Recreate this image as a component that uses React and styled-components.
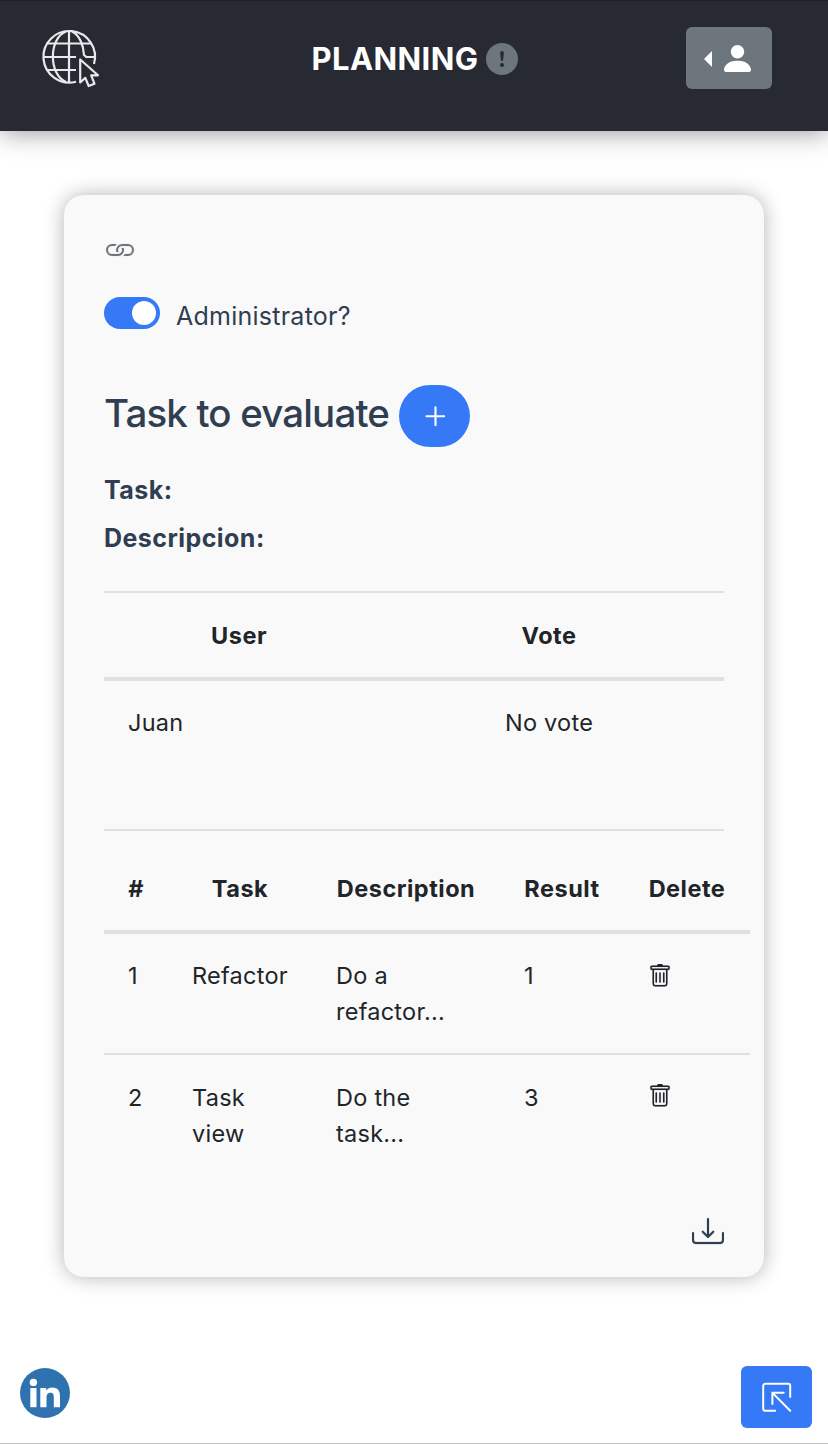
import React from "react";
import styled, { createGlobalStyle } from "styled-components";
import { BsTrash, BsLink } from "react-icons/bs";

const blue = "#3579f7";
const slate = "#2f3e50";

const GlobalStyle = createGlobalStyle`
  * { box-sizing: border-box; }
  body {
    margin: 0;
    background: #fff;
    font-family: Inter, "Liberation Sans", sans-serif;
    color: ${slate};
  }
  svg { display: block; }
  button { border: 0; margin: 0; padding: 0; font: inherit; }
`;

const Page = styled.div`
  height: 1444px;
  display: flex;
  flex-direction: column;
  border-bottom: 1px solid #c4c4c6;
`;

const Header = styled.header`
  height: 131px;
  flex: none;
  display: grid;
  grid-template-columns: 1fr auto 1fr;
  align-items: start;
  padding: 26px 56px 0;
  background: #272a33;
  border-top: 1px solid #1d2027;
  box-shadow: 0 0 26px rgba(0, 0, 0, 0.45);
`;

const Brand = styled.div`
  margin-left: -16px;
  padding-top: 1px;
`;

const Title = styled.h1`
  margin: 16px 0 0 2px;
  display: flex;
  align-items: center;
  gap: 8px;
  height: 32px;
  font-size: 31px;
  line-height: 32px;
  font-weight: 700;
  letter-spacing: 0.4px;
  color: #fff;
`;

const UserButton = styled.button`
  justify-self: end;
  width: 86px;
  height: 62px;
  display: flex;
  align-items: center;
  padding-left: 18px;
  gap: 12px;
  border-radius: 6px;
  background: #6d757d;
`;

const Caret = styled.span`
  margin-top: 2px;
  border: 8px solid transparent;
  border-left: 0;
  border-right-color: #fff;
`;

const Card = styled.main`
  width: 700px;
  height: 1082px;
  flex: none;
  margin: 64px 0 0 64px;
  padding: 38px 40px 0;
  display: flex;
  flex-direction: column;
  border-radius: 20px;
  background: #f9f9f9;
  box-shadow: 0 0 20px rgba(0, 0, 0, 0.3);
`;

const LinkIcon = styled(BsLink)`
  color: #6d757d;
  stroke: #6d757d;
  stroke-width: 0.05;
`;

const TrashIcon = styled(BsTrash)`
  stroke: currentColor;
  stroke-width: 0.1;
`;

const AdminRow = styled.label`
  display: flex;
  align-items: center;
  gap: 16px;
  height: 32px;
  margin-top: 32px;
  font-size: 25px;
  letter-spacing: 0.25px;
`;

const AdminText = styled.span`
  padding-top: 6px;
`;

const Switch = styled.span`
  width: 56px;
  height: 32px;
  padding: 4px;
  display: flex;
  justify-content: flex-end;
  border-radius: 16px;
  background: ${blue};
`;

const Knob = styled.span`
  width: 24px;
  height: 24px;
  border-radius: 50%;
  background: #fff;
`;

const EvaluateRow = styled.div`
  display: flex;
  height: 62px;
  margin-top: 56px;
`;

const Heading = styled.h2`
  width: 295px;
  margin: 0;
  font-size: 38.5px;
  line-height: 57px;
  font-weight: 500;
  letter-spacing: -0.85px;
  white-space: nowrap;
`;

const AddButton = styled.button`
  width: 71px;
  height: 62px;
  display: grid;
  place-items: center;
  border-radius: 31px;
  background: ${blue};
`;

const Facts = styled.div`
  margin-top: 19px;
  height: 125px;
  font-size: 25px;
  line-height: 48px;
  font-weight: 700;
  letter-spacing: 0.45px;
`;

const Fact = styled.div``;

const VoteSection = styled.section`
  height: 240px;
  border-top: 2px solid #dee0e2;
  border-bottom: 2px solid #dee0e2;
`;

const TaskSection = styled.section`
  width: 646px;
  padding-top: 15px;
`;

const Table = styled.table`
  width: 100%;
  table-layout: fixed;
  border-collapse: separate;
  border-spacing: 0;
  color: #212529;
  font-size: 23.5px;
  line-height: 36px;
  letter-spacing: 0.5px;
`;

const HeadCell = styled.th`
  width: ${(p) => p.$width}px;
  height: 88px;
  padding: 2px 0 0;
  font-weight: 700;
  text-align: center;
  border-bottom: 4px solid #dee1e4;
`;

const Cell = styled.td`
  padding: ${(p) => (p.$next ? "25px" : "24px")} 24px 23px;
  vertical-align: top;
  text-align: ${(p) => (p.$center ? "center" : "left")};
  letter-spacing: 0.25px;
  border-top: ${(p) => (p.$next ? "2px solid #dee0e2" : "0")};
`;

const DeleteCell = styled(Cell)`
  padding-top: ${(p) => (p.$next ? "29px" : "30px")};
`;

const DownloadRow = styled.div`
  display: flex;
  justify-content: flex-end;
  margin-top: auto;
  padding-bottom: 29px;
`;

const Footer = styled.footer`
  display: flex;
  justify-content: space-between;
  align-items: flex-start;
  margin-top: 89px;
  padding: 0 16px 0 20px;
`;

const SocialLink = styled.a`
  display: block;
  margin-top: 2px;
`;

const ExitButton = styled.button`
  width: 71px;
  height: 62px;
  display: grid;
  place-items: center;
  border-radius: 6px;
  background: ${blue};
`;

const GlobeLogo = () => (
  <svg width="62" height="62" viewBox="40 28 62 62" fill="none" stroke="#e6eaeb" strokeWidth="2.200">
    <path d="M76 81.700A25.800 25.800 0 1 1 94 64" />
    <path d="M69 31V82.500M46.500 43.500H91.500M43 57H76M85.500 57H95M47 70H76" />
    <path d="M66 31.500C48.500 38 48.500 75 66 82M72 31.500C80 35 83.500 46 84 55L87 57.500" />
    <path d="M80.200 59.500V82.500L85.300 77.800L88.700 86L94.500 83.800L91.200 75.300H98Z" strokeLinejoin="round" />
  </svg>
);

const AlertIcon = () => (
  <svg width="32" height="32" viewBox="0 0 16 16">
    <circle cx="8" cy="8" r="8" fill="#6d757d" />
    <path fill="#272a33" d="M8 4a.9.9 0 0 0-.9.995l.35 3.507a.55.55 0 0 0 1.1 0l.35-3.507A.9.9 0 0 0 8 4zm0 6a1 1 0 1 0 0 2 1 1 0 0 0 0-2z" />
  </svg>
);

const PersonIcon = () => (
  <svg width="27" height="27" viewBox="2 2 12 12" fill="#fff">
    <path d="M3 14s-1 0-1-1 1-4 6-4 6 3 6 4-1 1-1 1H3zm5-6a3 3 0 1 0 0-6 3 3 0 0 0 0 6z" />
  </svg>
);

const PlusIcon = () => (
  <svg width="20" height="20" viewBox="0 0 20 20" stroke="#fff" strokeWidth="2.100" strokeLinecap="round">
    <path d="M10.500 1.200V19M1.500 10.200H19.200" />
  </svg>
);

const DownloadIcon = () => (
  <svg width="32" height="32" viewBox="0 0 16 16" fill={slate} stroke={slate} strokeWidth="0.100">
    <path d="M.5 8a.5.5 0 0 1 .5.5V12a1 1 0 0 0 1 1h12a1 1 0 0 0 1-1V8.500a.5.5 0 0 1 1 0V12a2 2 0 0 1-2 2H2a2 2 0 0 1-2-2V8.500A.5.5 0 0 1 .5 8z" />
    <path d="M5 7.500a.5.5 0 0 1 .707 0L8 9.793 10.293 7.500a.5.5 0 1 1 .707.707l-2.646 2.647a.5.5 0 0 1-.708 0L5 8.207A.5.5 0 0 1 5 7.500z" />
    <path d="M8 1a.5.5 0 0 1 .5.5v8a.5.5 0 0 1-1 0v-8A.5.5 0 0 1 8 1z" />
  </svg>
);

const ExitIcon = () => (
  <svg width="30" height="30" viewBox="0.800 -0.600 30 30" fill="none" stroke="#fff" strokeWidth="2" strokeLinecap="round" strokeLinejoin="round">
    <path d="M14 28.200H4A2 2 0 0 1 2 26.200V3.200A2 2 0 0 1 4 1.200H27A2 2 0 0 1 29 3.200V14.500" />
    <path d="M11.200 21.500V10.200H22.500M11.500 10.500L29 28.200" strokeLinejoin="miter" />
  </svg>
);

const LinkedInLogo = () => (
  <svg width="50" height="50" viewBox="0 0 50 50" fill="#fff">
    <circle cx="25" cy="25" r="25" fill="#2f72b0" />
    <circle cx="13.400" cy="14.400" r="3.700" />
    <path d="M10.300 20H16.500V39.200H10.300Z" />
    <path d="M20.300 20H26.200V22.600C27.200 20.900 29.200 19.500 32.200 19.500C38.300 19.500 40 23.300 40 28.700V39.200H33.800V29.800C33.800 27.300 33.600 24.800 30.600 24.800C27.500 24.800 26.500 27 26.500 29.700V39.200H20.300Z" />
  </svg>
);

const tasks = [
  { id: 1, name: "Refactor", description: "Do a refactor...", result: 1 },
  { id: 2, name: "Task view", description: "Do the task...", result: 3 },
];

export default function App() {
  return (
    <>
      <GlobalStyle />
      <Page>
        <Header>
          <Brand><GlobeLogo /></Brand>
          <Title>PLANNING<AlertIcon /></Title>
          <UserButton aria-label="User menu"><Caret /><PersonIcon /></UserButton>
        </Header>
        <Card>
          <LinkIcon size={32} />
          <AdminRow>
            <Switch><Knob /></Switch>
            <AdminText>Administrator?</AdminText>
          </AdminRow>
          <EvaluateRow>
            <Heading>Task to evaluate</Heading>
            <AddButton aria-label="Add task"><PlusIcon /></AddButton>
          </EvaluateRow>
          <Facts>
            <Fact>Task:</Fact>
            <Fact>Descripcion:</Fact>
          </Facts>
          <VoteSection>
            <Table>
              <thead>
                <tr>
                  <HeadCell $width={270}>User</HeadCell>
                  <HeadCell $width={350}>Vote</HeadCell>
                </tr>
              </thead>
              <tbody>
                <tr>
                  <Cell>Juan</Cell>
                  <Cell $center>No vote</Cell>
                </tr>
              </tbody>
            </Table>
          </VoteSection>
          <TaskSection>
            <Table>
              <thead>
                <tr>
                  <HeadCell $width={64}>#</HeadCell>
                  <HeadCell $width={144}>Task</HeadCell>
                  <HeadCell $width={188}>Description</HeadCell>
                  <HeadCell $width={124}>Result</HeadCell>
                  <HeadCell $width={126}>Delete</HeadCell>
                </tr>
              </thead>
              <tbody>
                {tasks.map((task, i) => (
                  <tr key={task.id}>
                    <Cell $next={i > 0}>{task.id}</Cell>
                    <Cell $next={i > 0}>{task.name}</Cell>
                    <Cell $next={i > 0}>{task.description}</Cell>
                    <Cell $next={i > 0}>{task.result}</Cell>
                    <DeleteCell $next={i > 0}><TrashIcon size={24} /></DeleteCell>
                  </tr>
                ))}
              </tbody>
            </Table>
          </TaskSection>
          <DownloadRow><DownloadIcon /></DownloadRow>
        </Card>
        <Footer>
          <SocialLink aria-label="LinkedIn"><LinkedInLogo /></SocialLink>
          <ExitButton aria-label="Leave"><ExitIcon /></ExitButton>
        </Footer>
      </Page>
    </>
  );
}
